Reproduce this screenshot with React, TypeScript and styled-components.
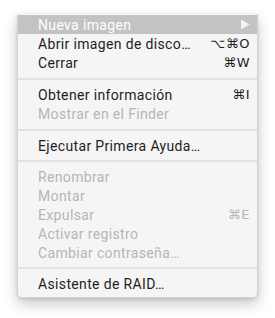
import styled, { createGlobalStyle } from 'styled-components'
import { FC } from 'react'

const GlobalStyle = createGlobalStyle`
  html, body {
    margin: 0;
    padding: 0;
    background: #ffffff;
  }
  body {
    font-family: Roboto, "Noto Sans", "DejaVu Sans", sans-serif;
    -webkit-font-smoothing: antialiased;
  }
`

const Page = styled.div`
  padding: 14px 0 0 17px;
  width: 275px;
  height: 318px;
  box-sizing: border-box;
`

const Menu = styled.ul`
  list-style: none;
  margin: 0;
  padding: 1px 0 4px;
  width: 241px;
  box-sizing: border-box;
  background: #f5f5f5;
  border: 1px solid #d4d4d4;
  border-top: none;
  border-radius: 0 0 5px 5px;
  box-shadow: 0 6px 14px rgba(0, 0, 0, 0.22), 0 1px 3px rgba(0, 0, 0, 0.12);
`

const Row = styled.li<{ $disabled?: boolean; $active?: boolean }>`
  height: 19px;
  display: flex;
  align-items: center;
  justify-content: space-between;
  padding: 0 7px 0 20px;
  font-size: 14px;
  letter-spacing: 0.35px;
  color: ${({ $disabled, $active }) => ($active ? '#ffffff' : $disabled ? '#b5b5b5' : '#1e1e1e')};
  background: ${({ $active }) => ($active ? '#c3c3c3' : 'transparent')};
`

const Shortcut = styled.span`
  font-family: "DejaVu Sans", sans-serif;
  font-size: 13px;
  letter-spacing: 0.5px;
`

const Separator = styled.li<{ $height: number }>`
  height: ${({ $height }) => $height}px;
  display: flex;
  align-items: center;
  &::after {
    content: '';
    flex: 1;
    height: 2px;
    background: #e2e2e2;
  }
`

const Arrow: FC = () => (
  <svg width="10" height="11" viewBox="0 0 10 11">
    <path d="M1 0.5 L9.5 5.5 L1 10.5 Z" fill="#f4f4f4" />
  </svg>
)

type Item = { label: string; shortcut?: string; disabled?: boolean } | { sep: number }

const items: Item[] = [
  { label: 'Abrir imagen de disco…', shortcut: '⌥⌘O' },
  { label: 'Cerrar', shortcut: '⌘W' },
  { sep: 13 },
  { label: 'Obtener información', shortcut: '⌘I' },
  { label: 'Mostrar en el Finder', disabled: true },
  { sep: 13 },
  { label: 'Ejecutar Primera Ayuda…' },
  { sep: 12 },
  { label: 'Renombrar', disabled: true },
  { label: 'Montar', disabled: true },
  { label: 'Expulsar', shortcut: '⌘E', disabled: true },
  { label: 'Activar registro', disabled: true },
  { label: 'Cambiar contraseña…', disabled: true },
  { sep: 12 },
  { label: 'Asistente de RAID…' },
]

export default function App() {
  return (
    <Page>
      <GlobalStyle />
      <Menu>
        <Row $active>
          <span>Nueva imagen</span>
          <Arrow />
        </Row>
        {items.map((item, i) =>
          'sep' in item ? (
            <Separator key={i} $height={item.sep} />
          ) : (
            <Row key={i} $disabled={item.disabled}>
              <span>{item.label}</span>
              {item.shortcut && <Shortcut>{item.shortcut}</Shortcut>}
            </Row>
          )
        )}
      </Menu>
    </Page>
  )
}
